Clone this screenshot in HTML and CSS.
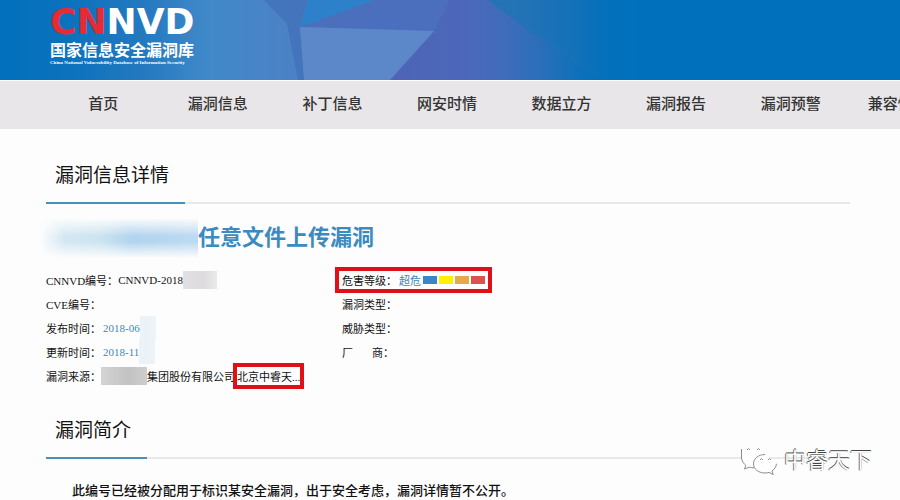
FILE: index.html
```
<!DOCTYPE html>
<html lang="zh-CN">
<head>
    <meta charset="UTF-8">
    <meta name="viewport" content="width=device-width, initial-scale=1.0">
    <title>国家信息安全漏洞库</title>
    <link rel="stylesheet" href="styles.css">
</head>
<body>

    <header class="header">
        <svg class="header-bg" viewBox="0 0 900 80" preserveAspectRatio="none" aria-hidden="true">
            <defs>
                <linearGradient id="base" gradientUnits="userSpaceOnUse" x1="0" y1="0" x2="900" y2="0">
                    <stop offset="0" stop-color="#0270bd"/>
                    <stop offset="0.08" stop-color="#0c72bd"/>
                    <stop offset="0.16" stop-color="#2479c0"/>
                    <stop offset="0.23" stop-color="#4089c9"/>
                    <stop offset="0.32" stop-color="#4b82c6"/>
                    <stop offset="0.43" stop-color="#4a74c0"/>
                    <stop offset="0.5" stop-color="#4a6cbc"/>
                    <stop offset="0.56" stop-color="#3470bb"/>
                    <stop offset="0.61" stop-color="#1a70b8"/>
                    <stop offset="0.67" stop-color="#0070bd"/>
                    <stop offset="1" stop-color="#0070bd"/>
                </linearGradient>
                <linearGradient id="shade" x1="0" y1="0" x2="1" y2="0">
                    <stop offset="0" stop-color="#2474b4"/>
                    <stop offset="1" stop-color="#1070b8" stop-opacity="0"/>
                </linearGradient>
                <linearGradient id="violet" x1="0" y1="0" x2="1" y2="0">
                    <stop offset="0" stop-color="#4e64b6"/>
                    <stop offset="0.4" stop-color="#4c68ba"/>
                    <stop offset="1" stop-color="#2c70bc" stop-opacity="0"/>
                </linearGradient>
            </defs>
            <rect width="900" height="80" fill="url(#base)"/>
            <polygon points="264,0 308,0 300,26 304,80 298,80 287,24" fill="#3d6cb6" opacity="0.6"/>
            <polygon points="308,0 375,0 300,27" fill="#2d80ca"/>
            <polygon points="375,0 450,0 434,31 300,27" fill="#4b6fbd"/>
            <polygon points="434,31 450,0 488,0 580,60 590,80 390,80" fill="url(#violet)"/>
            <polygon points="300,27 434,31 390,80 304,80" fill="#5c88ca"/>
            <polygon points="488,0 640,0 640,80 600,80 530,32" fill="url(#shade)"/>
        </svg>
        <a class="logo" href="#">
            <span class="logo-mark"><em>CN</em>NVD</span>
            <span class="logo-cn">国家信息安全漏洞库</span>
            <span class="logo-en">China National Vulnerability Database of Information Security</span>
        </a>
    </header>

    <nav class="nav">
        <ul>
            <li><a href="#">首页</a></li>
            <li><a href="#">漏洞信息</a></li>
            <li><a href="#">补丁信息</a></li>
            <li><a href="#">网安时情</a></li>
            <li><a href="#">数据立方</a></li>
            <li><a href="#">漏洞报告</a></li>
            <li><a href="#">漏洞预警</a></li>
            <li><a href="#">兼容性服务</a></li>
        </ul>
    </nav>

    <main class="container">
        <section>
            <div class="section-title"><h2>漏洞信息详情</h2></div>
            <h1 class="vul-name"><span class="name-blur"></span>任意文件上传漏洞</h1>
            <div class="detail">
                <ul>
                    <li>CNNVD编号：<span>CNNVD-2018</span><span class="smudge smudge-id"></span></li>
                    <li>CVE编号：</li>
                    <li>发布时间：<a href="#">2018-06</a><span class="smudge smudge-date"></span></li>
                    <li>更新时间：<a href="#">2018-11</a><span class="smudge smudge-date"></span></li>
                    <li>漏洞来源：<span class="smudge smudge-source"></span>集团股份有限公司<span class="mark mark-source">北京中睿天...</span></li>
                </ul>
                <ul>
                    <li>
                        <span class="mark">危害等级：<a href="#">超危</a><span class="levels"><i class="blue"></i><i class="yellow"></i><i class="orange"></i><i class="red"></i></span></span>
                    </li>
                    <li>漏洞类型：</li>
                    <li>威胁类型：</li>
                    <li><span class="spread"><span>厂</span><span>商：</span></span></li>
                </ul>
            </div>
        </section>

        <section>
            <div class="section-title"><h2>漏洞简介</h2></div>
            <p class="intro">此编号已经被分配用于标识某安全漏洞，出于安全考虑，漏洞详情暂不公开。</p>
        </section>
    </main>

    <div class="watermark">
        <svg width="38" height="30" viewBox="0 0 38 30" fill="none" stroke="#8c8c8c" aria-hidden="true">
            <path d="M1.500 4C1 6 1 9 1 11.500c0 3.300 1.900 6 4.800 7.900L4.500 23.500l4.800-2.300c1.500.4 3 .6 4.700.6L26 10 20 2" fill="#fff" stroke="none"/>
            <path d="M1.500 3v9c.5 3 2 5.600 4.300 7.400L4.500 23l4.800-1.800c1.500.4 3 .6 4.700.6"/>
            <path d="M25 8.500c-6.400 0-11.500 4-11.500 9.300S18.600 27 25 27c1.500 0 2.800-.2 4-.6l4.200 2.200-1.200-3.800c2.700-1.700 4.400-4.200 4.400-7" fill="#fff"/>
            <path d="M7 4l1.500-1.500L10 4M17 4l1.500-1.500L20 4M20 14l1.500-1.500L23 14M28 14l1.500-1.500L31 14"/>
        </svg>
        <span>中睿天下</span>
    </div>

</body>
</html>
```
FILE: styles.css
```
* {
    box-sizing: border-box;
}

body {
    margin: 0;
    position: relative;
    background: #fdfdfd;
    color: #111;
    font-family: "Liberation Serif", "Noto Sans CJK SC", sans-serif;
}

h1, h2, p, ul {
    margin: 0;
    padding: 0;
    font-weight: normal;
}

ul {
    list-style: none;
}

a {
    text-decoration: none;
}

/* header */
.header {
    position: relative;
    height: 80px;
    padding: 2px 46px 0 50px;
    background: #0070bd;
}

.header-bg {
    position: absolute;
    top: 0;
    left: 0;
    width: 100%;
    height: 100%;
}

.logo {
    position: relative;
    display: inline-flex;
    flex-direction: column;
    color: #fff;
    white-space: nowrap;
}

.logo-mark {
    font: bold 36px/40px "DejaVu Sans", sans-serif;
}

.logo-mark em {
    font-style: normal;
    color: #e62b34;
}

.logo-cn {
    font-size: 16px;
    line-height: 18px;
    font-weight: bold;
}

.logo-en {
    font-size: 5px;
    line-height: 6px;
    font-weight: bold;
}

/* navigation */
.nav {
    padding: 0 52px 0 46px;
    border-top: 1px solid #fff;
    background: #e8e6e8;
    overflow: hidden;
}

.nav ul {
    display: grid;
    grid-auto-flow: column;
    grid-auto-columns: calc(100% / 7);
}

.nav a {
    display: block;
    height: 48px;
    font-size: 15px;
    line-height: 46px;
    font-weight: 500;
    text-align: center;
    white-space: nowrap;
    color: #333;
}

/* content */
.container {
    padding: 22px 50px 0 46px;
}

.section-title {
    border-bottom: 2px solid #e8e9ea;
}

.section-title h2 {
    display: inline-block;
    margin-bottom: -2px;
    padding: 0 16px 0 9px;
    border-bottom: 2px solid #4a90b8;
    font-size: 19px;
    line-height: 50px;
    vertical-align: top;
    height: 53px;
}

.vul-name {
    display: flex;
    align-items: center;
    margin-top: 12px;
    font-size: 22px;
    line-height: 44px;
    font-weight: bold;
    color: #3b8bc0;
}

.name-blur {
    width: 158px;
    height: 40px;
    margin-left: -6px;
    background: linear-gradient(90deg, rgba(205, 228, 240, 0) 0, #d3e7f2 16%, #cde4f0 38%, #b2d4ee 58%, #bddaf0 100%);
    -webkit-mask: linear-gradient(transparent, #000 45%, #000 60%, transparent);
    mask: linear-gradient(transparent, #000 45%, #000 60%, transparent);
}

.detail {
    display: grid;
    grid-template-columns: 296px 1fr;
    margin-top: 8px;
    font-size: 11px;
    font-weight: 500;
}

.detail li {
    display: flex;
    align-items: center;
    height: 24px;
    white-space: nowrap;
}

.detail a {
    margin-left: 2px;
    font-weight: normal;
    color: #3f87b8;
}

.smudge {
    height: 18px;
}

.smudge-id {
    width: 34px;
    background: linear-gradient(90deg, #e2e0e2, #dddbdd 60%, #ebe9eb);
}

.smudge-date {
    width: 16px;
    height: 24px;
    background: linear-gradient(90deg, #e9f3fa, #eef3f7);
}

.smudge-source {
    width: 46px;
    background: linear-gradient(90deg, #d4d4d4, #c2c2c2 60%, #cecece);
}

.mark {
    position: relative;
    display: flex;
    align-items: center;
}

.mark::after {
    content: "";
    position: absolute;
    inset: -5px -7px;
    border: 4px solid #e01018;
}

.mark-source {
    margin-left: 2px;
}

.mark-source::after {
    inset: -5px -4px;
}

.levels {
    display: flex;
    gap: 2px;
    margin-left: 2px;
}

.levels i {
    width: 14px;
    height: 8px;
}

.blue {
    background: #3a86c8;
}

.yellow {
    background: #fff200;
}

.orange {
    background: #e8a94a;
}

.red {
    background: #d9534f;
}

.spread {
    display: flex;
    justify-content: space-between;
    width: 52px;
}

section + section {
    margin-top: 18px;
}

.intro {
    margin-top: 22px;
    padding-left: 26px;
    font-size: 13px;
    line-height: 20px;
    font-weight: 500;
}

/* account watermark */
.watermark {
    position: absolute;
    top: 446px;
    right: 28px;
    display: flex;
    align-items: center;
    gap: 6px;
    font-size: 22px;
    line-height: 30px;
    color: #fff;
    text-shadow: 0 -1px 0 #444, -1px 0 0 #777;
}
```
